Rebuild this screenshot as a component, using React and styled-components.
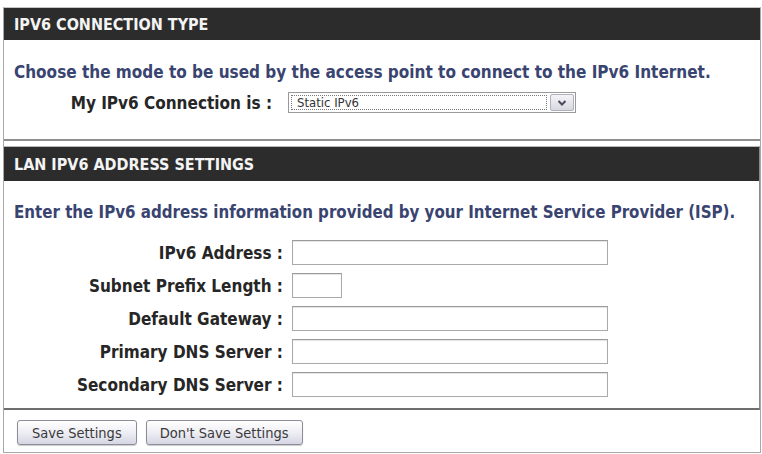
import React from 'react'
import styled, { createGlobalStyle } from 'styled-components'

const GlobalStyle = createGlobalStyle`
   html, body {
      margin: 0;
      padding: 0;
      background: #fff;
   }
   body {
      font-family: "DejaVu Sans Condensed", "DejaVu Sans", Tahoma, sans-serif;
   }
`

const Frame = styled.div`
   width: 756px;
   margin: 7px 0 0 3px;
   border: 1px solid #a8a8a8;
   border-top-color: #c4c4c4;
   background: #fff;
`

const Box = styled.section`
   border-bottom: 2px solid ${p => p.$edge || '#8e8e8e'};
   border-right: ${p => (p.$side ? '1px solid #8a8a8a' : '0')};
   margin-top: ${p => p.$gap || 0}px;
   border-top: ${p => (p.$gap ? '1px solid #b8b8b8' : '0')};
`

const Header = styled.header`
   height: ${p => p.$h}px;
   display: flex;
   align-items: center;
   padding-left: 10px;
   background: #2c2c2c;
   color: #f4f4f4;
   font-weight: bold;
   font-size: 16px;
`

const Body = styled.div`
   padding: ${p => p.$pad};
   display: flex;
   flex-direction: column;
`

const Lead = styled.p`
   margin: 0;
   padding-left: 10px;
   color: #394470;
   font-weight: bold;
   font-size: ${p => p.$size || 17}px;
   line-height: 18px;
   white-space: nowrap;
`

const Rows = styled.div`
   display: flex;
   flex-direction: column;
   gap: ${p => p.$gap || 8}px;
   margin-top: ${p => p.$top}px;
`

const Row = styled.div`
   display: grid;
   grid-template-columns: ${p => p.$label}px 1fr;
   column-gap: ${p => p.$space}px;
   align-items: center;
`

const Label = styled.label`
   text-align: right;
   color: #262626;
   font-weight: bold;
   font-size: 17px;
   line-height: 20px;
   white-space: nowrap;
`

const Field = styled.input`
   box-sizing: border-box;
   width: ${p => p.$w}px;
   height: 25px;
   margin: 0;
   border: 1px solid #a9a9a9;
   border-top-color: #9a9a9a;
   box-shadow: inset 0 1px 1px #e4e4e4;
   background: #fff;
   outline: none;
`

const Select = styled.div`
   box-sizing: border-box;
   width: 288px;
   height: 21px;
   display: flex;
   align-items: stretch;
   border: 1px solid #9a9a9a;
   background: #fff;
`

const Choice = styled.div`
   flex: 1;
   margin: 2px;
   padding-left: 5px;
   border: 1px dotted #777;
   display: flex;
   align-items: center;
   color: #333;
   font-size: 13px;
`

const Drop = styled.div`
   width: 22px;
   margin: 1px;
   display: flex;
   align-items: center;
   justify-content: center;
   border: 1px solid #b0b0bc;
   border-radius: 2px;
   background: linear-gradient(#f4f4f8, #d8d8e0);
`

const Actions = styled.div`
   height: 42px;
   display: flex;
   align-items: flex-start;
   gap: 9px;
   padding: 10px 0 0 13px;
   box-sizing: border-box;
`

const Button = styled.button`
   height: 25px;
   padding: 0 ${p => p.$pad}px;
   border: 1px solid #8c8c98;
   border-radius: 3px;
   background: linear-gradient(#ffffff 0%, #eeeef4 50%, #d6d6e4 100%);
   box-shadow: 0 1px 1px rgba(0, 0, 0, 0.2);
   color: #3a3a3a;
   font-family: "DejaVu Sans Condensed", "DejaVu Sans", Tahoma, sans-serif;
   font-size: 14.5px;
   cursor: pointer;
`

const lanFields = [
   { label: 'IPv6 Address', w: 316 },
   { label: 'Subnet Prefix Length', w: 50 },
   { label: 'Default Gateway', w: 316 },
   { label: 'Primary DNS Server', w: 316 },
   { label: 'Secondary DNS Server', w: 316 },
]

const Chevron = () => (
   <svg width="10" height="8" viewBox="0 0 10 8">
      <path d="M1.5 2 L5 5.5 L8.5 2" fill="none" stroke="#4a4a5a" strokeWidth="2" />
   </svg>
)

export default function App() {
   return (
      <>
         <GlobalStyle />
         <Frame>
            <Box>
               <Header $h={32}>IPV6 CONNECTION TYPE</Header>
               <Body $pad="23px 0 26px">
                  <Lead>Choose the mode to be used by the access point to connect to the IPv6 Internet.</Lead>
                  <Rows $top={11}>
                     <Row $label={268} $space={16}>
                        <Label>My IPv6 Connection is :</Label>
                        <Select>
                           <Choice>Static IPv6</Choice>
                           <Drop>
                              <Chevron />
                           </Drop>
                        </Select>
                     </Row>
                  </Rows>
               </Body>
            </Box>
            <Box $gap={5} $edge="#6e6e6e" $side>
               <Header $h={34}>LAN IPV6 ADDRESS SETTINGS</Header>
               <Body $pad="22px 0 11px">
                  <Lead $size={16.75}>
                     Enter the IPv6 address information provided by your Internet Service Provider (ISP).
                  </Lead>
                  <Rows $top={19}>
                     {lanFields.map(f => (
                        <Row key={f.label} $label={279} $space={9}>
                           <Label>{f.label} :</Label>
                           <Field type="text" $w={f.w} />
                        </Row>
                     ))}
                  </Rows>
               </Body>
            </Box>
            <Actions>
               <Button $pad={14}>Save Settings</Button>
               <Button $pad={13}>Don't Save Settings</Button>
            </Actions>
         </Frame>
      </>
   )
}
